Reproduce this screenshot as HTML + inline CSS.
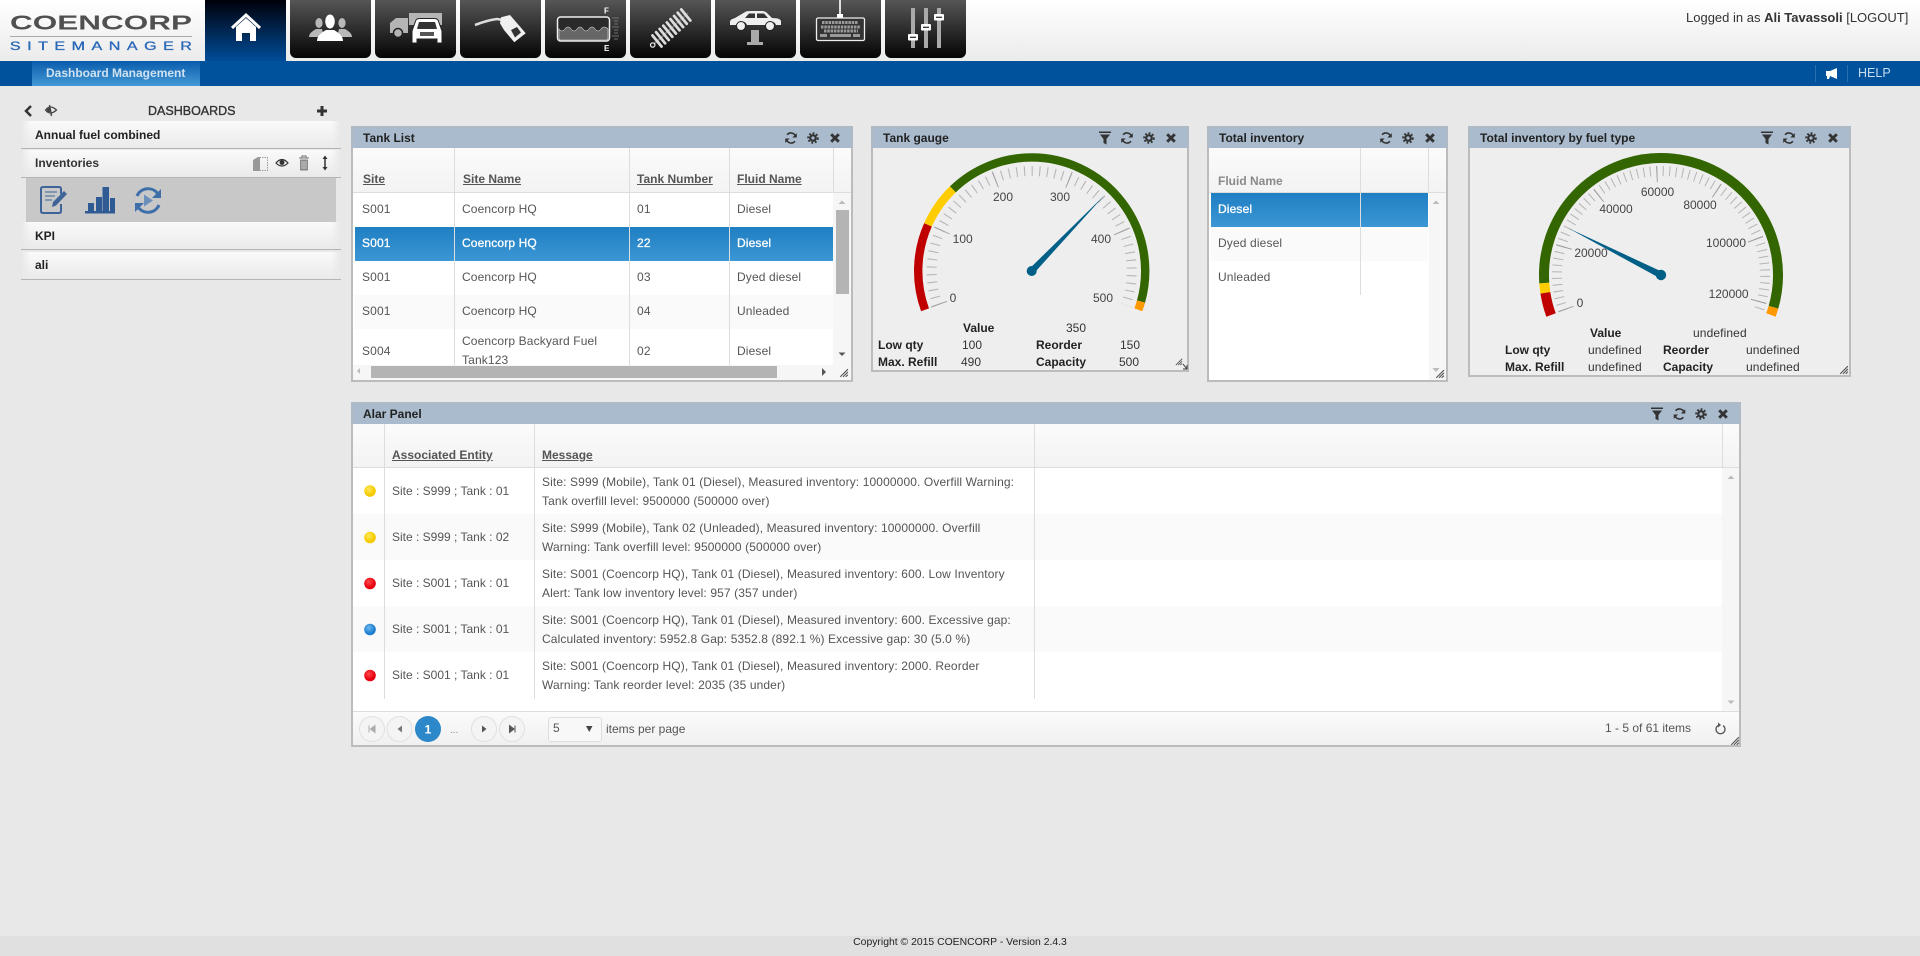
<!DOCTYPE html>
<html><head><meta charset="utf-8"><title>SiteManager</title>
<style>
*{box-sizing:border-box}
html,body{margin:0;padding:0}
body{width:1920px;height:956px;position:relative;overflow:hidden;background:#e8e8e8;font:12px/16px "Liberation Sans",Arial,sans-serif;color:#555}
.a{position:absolute}
.t{position:absolute;white-space:nowrap;line-height:16px;height:16px}
.b{font-weight:bold;color:#222}
.h{font-weight:bold;color:#555;text-decoration:underline}
.panel{position:absolute;border:2px solid #bcbcbc;border-top:0;background:#fff}
.ph{position:absolute;left:-2px;right:-2px;top:0;height:22px;background:#a9bbcd;border:2px solid #b0bac4;border-bottom:0}
.g{background:#eee}
.vl{position:absolute;width:1px;background:#ddd}
.row{position:absolute;height:34px}
.sel{background:linear-gradient(#1f7fc3,#3c96d4)}
.alt{background:#fafafa}
.s{color:#fff;-webkit-text-stroke:.3px #fff}
.l{letter-spacing:.14px}
.m{letter-spacing:.115px}
.side{position:absolute;left:21px;width:320px;height:28px;border-bottom:1px solid #b5b5b5;background:linear-gradient(90deg,#e8e8e8,rgba(232,232,232,0) 3%,rgba(232,232,232,0) 97%,#e8e8e8),linear-gradient(#fafafa,#eaeaea)}
</style></head><body>

<!-- header -->
<div class="a" style="left:0;top:0;width:1920px;height:61px;background:linear-gradient(#ffffff,#ebebeb)"></div>
<div class="a" style="left:205px;top:0;width:81px;height:61px;background:linear-gradient(#00000a,#004c98)"></div>
<div class="a" style="left:0;top:61px;width:1920px;height:25px;background:#00529c"></div>
<div class="a" style="left:32px;top:61px;width:168px;height:25px;background:linear-gradient(#0a5cab,#4499d6)"></div>
<div class="t" style="left:46px;top:65px;font-weight:bold;color:#cfe2f2">Dashboard Management</div>
<div class="a" style="left:290px;top:0;width:81px;height:58px;border-radius:0 0 6px 6px;background:linear-gradient(#565656,#040404)"></div>
<div class="a" style="left:375px;top:0;width:81px;height:58px;border-radius:0 0 6px 6px;background:linear-gradient(#565656,#040404)"></div>
<div class="a" style="left:460px;top:0;width:81px;height:58px;border-radius:0 0 6px 6px;background:linear-gradient(#565656,#040404)"></div>
<div class="a" style="left:545px;top:0;width:81px;height:58px;border-radius:0 0 6px 6px;background:linear-gradient(#565656,#040404)"></div>
<div class="a" style="left:630px;top:0;width:81px;height:58px;border-radius:0 0 6px 6px;background:linear-gradient(#565656,#040404)"></div>
<div class="a" style="left:715px;top:0;width:81px;height:58px;border-radius:0 0 6px 6px;background:linear-gradient(#565656,#040404)"></div>
<div class="a" style="left:800px;top:0;width:81px;height:58px;border-radius:0 0 6px 6px;background:linear-gradient(#565656,#040404)"></div>
<div class="a" style="left:885px;top:0;width:81px;height:58px;border-radius:0 0 6px 6px;background:linear-gradient(#565656,#040404)"></div>
<div class="t" style="left:1686px;top:10px;font-size:13px;color:#333">Logged in as <b>Ali Tavassoli</b> [LOGOUT]</div>
<div class="a" style="left:1815px;top:65px;width:1px;height:17px;background:#2a6fb0"></div>
<div class="a" style="left:1847px;top:65px;width:1px;height:17px;background:#2a6fb0"></div>
<div class="t" style="left:1858px;top:65px;font-size:12.5px;color:#c6dcf0">HELP</div>

<!-- sidebar -->
<div class="t" style="left:148px;top:103px;font-size:12.5px;color:#333;-webkit-text-stroke:.35px #333">DASHBOARDS</div>
<div class="side" style="top:121px"></div>
<div class="side" style="top:150px"></div>
<div class="a" style="left:26px;top:178px;width:310px;height:44px;background:#c8c8c8"></div>
<div class="side" style="top:222px"></div>
<div class="side" style="top:252px"></div>
<div class="t b" style="left:35px;top:127px">Annual fuel combined</div>
<div class="t b" style="left:35px;top:155px;color:#333">Inventories</div>
<div class="t b" style="left:35px;top:228px">KPI</div>
<div class="t b" style="left:35px;top:257px">ali</div>

<!-- Tank list -->
<div class="panel" style="left:351px;top:126px;width:502px;height:256px"><div class="ph"></div></div>
<div class="a" style="left:353px;top:148px;width:498px;height:45px;background:linear-gradient(#fbfbfb,#f3f3f3);border-bottom:1px solid #ddd"></div>
<div class="a" style="left:833px;top:193px;width:18px;height:172px;background:#f6f6f6"></div>
<div class="a" style="left:353px;top:365px;width:498px;height:15px;background:#f6f6f6"></div>
<div class="row sel" style="left:355px;top:227px;width:478px"></div>
<div class="row alt" style="left:355px;top:295px;width:478px"></div>
<div class="vl" style="left:454px;top:148px;height:217px"></div>
<div class="vl" style="left:629px;top:148px;height:217px"></div>
<div class="vl" style="left:729px;top:148px;height:217px"></div>
<div class="vl" style="left:833px;top:148px;height:45px"></div>
<div class="a" style="left:836px;top:210px;width:13px;height:84px;background:#b4b4b4"></div>
<div class="a" style="left:371px;top:366px;width:406px;height:12px;background:#b4b4b4"></div>
<div class="t b" style="left:363px;top:130px">Tank List</div>
<div class="t h" style="left:363px;top:171px">Site</div>
<div class="t h" style="left:463px;top:171px">Site Name</div>
<div class="t h" style="left:637px;top:171px">Tank Number</div>
<div class="t h" style="left:737px;top:171px">Fluid Name</div>
<div class="t l" style="left:362px;top:201px">S001</div><div class="t l" style="left:462px;top:201px">Coencorp HQ</div><div class="t l" style="left:637px;top:201px">01</div><div class="t l" style="left:737px;top:201px">Diesel</div>
<div class="t s l" style="left:362px;top:235px">S001</div><div class="t s l" style="left:462px;top:235px">Coencorp HQ</div><div class="t s l" style="left:637px;top:235px">22</div><div class="t s l" style="left:737px;top:235px">Diesel</div>
<div class="t l" style="left:362px;top:269px">S001</div><div class="t l" style="left:462px;top:269px">Coencorp HQ</div><div class="t l" style="left:637px;top:269px">03</div><div class="t l" style="left:737px;top:269px">Dyed diesel</div>
<div class="t l" style="left:362px;top:303px">S001</div><div class="t l" style="left:462px;top:303px">Coencorp HQ</div><div class="t l" style="left:637px;top:303px">04</div><div class="t l" style="left:737px;top:303px">Unleaded</div>
<div class="t l" style="left:362px;top:343px">S004</div>
<div class="a l" style="left:462px;top:332px;width:160px;height:32px;overflow:hidden;line-height:19px;white-space:nowrap">Coencorp Backyard Fuel<br>Tank123</div>
<div class="t l" style="left:637px;top:343px">02</div><div class="t l" style="left:737px;top:343px">Diesel</div>

<!-- Tank gauge -->
<div class="panel g" style="left:871px;top:126px;width:318px;height:246px"><div class="ph"></div></div>
<div class="t b" style="left:883px;top:130px">Tank gauge</div>
<div class="t b" style="left:963px;top:320px">Value</div><div class="t" style="left:1066px;top:320px;color:#333">350</div>
<div class="t b" style="left:878px;top:337px">Low qty</div><div class="t" style="left:962px;top:337px;color:#333">100</div><div class="t b" style="left:1036px;top:337px">Reorder</div><div class="t" style="left:1120px;top:337px;color:#333">150</div>
<div class="t b" style="left:878px;top:354px">Max. Refill</div><div class="t" style="left:961px;top:354px;color:#333">490</div><div class="t b" style="left:1036px;top:354px">Capacity</div><div class="t" style="left:1119px;top:354px;color:#333">500</div>

<!-- Total inventory -->
<div class="panel" style="left:1207px;top:126px;width:241px;height:256px"><div class="ph"></div></div>
<div class="a" style="left:1209px;top:148px;width:237px;height:45px;background:linear-gradient(#fbfbfb,#f3f3f3);border-bottom:1px solid #ddd"></div>
<div class="a" style="left:1429px;top:193px;width:17px;height:187px;background:#f6f6f6"></div>
<div class="row sel" style="left:1211px;top:193px;width:217px"></div>
<div class="row alt" style="left:1211px;top:227px;width:217px"></div>
<div class="vl" style="left:1360px;top:148px;height:147px"></div>
<div class="vl" style="left:1428px;top:148px;height:45px"></div>
<div class="t b" style="left:1219px;top:130px">Total inventory</div>
<div class="t" style="left:1218px;top:173px;font-weight:bold;color:#8a8a8a">Fluid Name</div>
<div class="t s l" style="left:1218px;top:201px">Diesel</div>
<div class="t l" style="left:1218px;top:235px">Dyed diesel</div>
<div class="t l" style="left:1218px;top:269px">Unleaded</div>

<!-- Fuel type gauge -->
<div class="panel g" style="left:1468px;top:126px;width:383px;height:251px"><div class="ph"></div></div>
<div class="t b" style="left:1480px;top:130px">Total inventory by fuel type</div>
<div class="t b" style="left:1590px;top:325px">Value</div><div class="t m" style="left:1693px;top:325px;color:#333">undefined</div>
<div class="t b" style="left:1505px;top:342px">Low qty</div><div class="t m" style="left:1588px;top:342px;color:#333">undefined</div><div class="t b" style="left:1663px;top:342px">Reorder</div><div class="t m" style="left:1746px;top:342px;color:#333">undefined</div>
<div class="t b" style="left:1505px;top:359px">Max. Refill</div><div class="t m" style="left:1588px;top:359px;color:#333">undefined</div><div class="t b" style="left:1663px;top:359px">Capacity</div><div class="t m" style="left:1746px;top:359px;color:#333">undefined</div>

<!-- Alar panel -->
<div class="panel" style="left:351px;top:402px;width:1390px;height:345px"><div class="ph"></div></div>
<div class="a" style="left:353px;top:424px;width:1386px;height:44px;background:linear-gradient(#fbfbfb,#f3f3f3);border-bottom:1px solid #ddd"></div>
<div class="a" style="left:1722px;top:468px;width:17px;height:243px;background:#f6f6f6"></div>
<div class="a alt" style="left:353px;top:514px;width:1369px;height:46px"></div>
<div class="a alt" style="left:353px;top:606px;width:1369px;height:46px"></div>
<div class="vl" style="left:384px;top:424px;height:275px"></div>
<div class="vl" style="left:534px;top:424px;height:275px"></div>
<div class="vl" style="left:1034px;top:424px;height:275px"></div>
<div class="vl" style="left:1722px;top:424px;height:44px"></div>
<div class="a" style="left:353px;top:711px;width:1386px;height:34px;background:linear-gradient(#fbfbfb,#f0f0f0);border-top:1px solid #ddd"></div>
<div class="t b" style="left:363px;top:406px">Alar Panel</div>
<div class="t h" style="left:392px;top:447px">Associated Entity</div>
<div class="t h" style="left:542px;top:447px">Message</div>
<div class="t" style="left:392px;top:483px">Site : S999 ; Tank : 01</div>
<div class="t" style="left:392px;top:529px">Site : S999 ; Tank : 02</div>
<div class="t" style="left:392px;top:575px">Site : S001 ; Tank : 01</div>
<div class="t" style="left:392px;top:621px">Site : S001 ; Tank : 01</div>
<div class="t" style="left:392px;top:667px">Site : S001 ; Tank : 01</div>
<div class="t m" style="left:542px;top:474px">Site: S999 (Mobile), Tank 01 (Diesel), Measured inventory: 10000000. Overfill Warning:</div>
<div class="t m" style="left:542px;top:493px">Tank overfill level: 9500000 (500000 over)</div>
<div class="t m" style="left:542px;top:520px">Site: S999 (Mobile), Tank 02 (Unleaded), Measured inventory: 10000000. Overfill</div>
<div class="t m" style="left:542px;top:539px">Warning: Tank overfill level: 9500000 (500000 over)</div>
<div class="t m" style="left:542px;top:566px">Site: S001 (Coencorp HQ), Tank 01 (Diesel), Measured inventory: 600. Low Inventory</div>
<div class="t m" style="left:542px;top:585px">Alert: Tank low inventory level: 957 (357 under)</div>
<div class="t m" style="left:542px;top:612px">Site: S001 (Coencorp HQ), Tank 01 (Diesel), Measured inventory: 600. Excessive gap:</div>
<div class="t m" style="left:542px;top:631px">Calculated inventory: 5952.8 Gap: 5352.8 (892.1 %) Excessive gap: 30 (5.0 %)</div>
<div class="t m" style="left:542px;top:658px">Site: S001 (Coencorp HQ), Tank 01 (Diesel), Measured inventory: 2000. Reorder</div>
<div class="t m" style="left:542px;top:677px">Warning: Tank reorder level: 2035 (35 under)</div>
<div class="a" style="left:548px;top:717px;width:54px;height:25px;border:1px solid #ddd;border-radius:3px;background:#f8f8f8"></div>
<div class="t" style="left:553px;top:720px">5</div>
<div class="t" style="left:606px;top:721px">items per page</div>
<div class="t" style="left:1605px;top:720px">1 - 5 of 61 items</div>
<div class="t" style="left:450px;top:723px;font-size:10px;color:#888">...</div>

<!-- footer -->
<div class="a" style="left:0;top:936px;width:1920px;height:20px;background:#e0e0e0"></div>
<div class="t" style="left:0;top:935px;width:1920px;text-align:center;font-size:10.4px;color:#222">Copyright © 2015 COENCORP - Version 2.4.3</div>

<svg class="a" style="left:0;top:0" width="1920" height="956" viewBox="0 0 1920 956" xmlns="http://www.w3.org/2000/svg" font-family="Liberation Sans, Arial, sans-serif">
<defs>
<symbol id="rf" viewBox="-1 -1 18 18"><path d="M13.2 6.5A5.5 5.5 0 0 0 3.6 4.4M2.8 9.5A5.5 5.5 0 0 0 12.4 11.6" fill="none" stroke="#333" stroke-width="1.8"/><path d="M14.5 2.5v5h-5zM1.5 13.5v-5h5z" fill="#333"/></symbol>
<symbol id="gr" viewBox="-2 -2 20 20"><circle cx="8" cy="8" r="3.4" fill="none" stroke="#333" stroke-width="2.8"/><circle cx="8" cy="8" r="6" fill="none" stroke="#333" stroke-width="2.4" pathLength="16" stroke-dasharray="1 1"/></symbol>
<symbol id="cl" viewBox="-1.500 -1.500 19 19"><path d="M3.5 3.5L12.5 12.5M12.5 3.5L3.5 12.5" stroke="#333" stroke-width="3.4"/></symbol>
<symbol id="fl" viewBox="0 0 16 16"><path d="M2 1.5h12V3H2zM3 4.5h10L9.5 9v5.5l-3-1.5V9z" fill="#333"/></symbol>
<symbol id="gp" viewBox="0 0 10 10"><path d="M9 2L2 9M9 4.5L4.5 9M9 7L7 9" stroke="#555" stroke-width="1"/></symbol>
<radialGradient id="dy" cx=".4" cy=".35"><stop offset="0" stop-color="#ffe95a"/><stop offset="1" stop-color="#f5ca00"/></radialGradient>
<radialGradient id="dr" cx=".4" cy=".35"><stop offset="0" stop-color="#ff4a4a"/><stop offset="1" stop-color="#e80010"/></radialGradient>
<radialGradient id="db" cx=".4" cy=".35"><stop offset="0" stop-color="#6db9f0"/><stop offset="1" stop-color="#1f7fcf"/></radialGradient>
</defs>

<!-- logo -->
<text x="10" y="29.500" font-size="20" font-weight="bold" fill="#505050" textLength="182" lengthAdjust="spacingAndGlyphs">COENCORP</text>
<rect x="10" y="36" width="182" height="1" fill="#aaa"/>
<g transform="scale(1.400 1)"><text x="7.100" y="50" font-size="11.500" fill="#2b68b8" stroke="#2b68b8" stroke-width=".3" textLength="130" lengthAdjust="spacing">SITEMANAGER</text></g>

<!-- home -->
<path d="M232 28L246 15L260 28" fill="none" stroke="#fff" stroke-width="3"/>
<path d="M236 27L246 18L256 27V41H250V33H242V41H236Z" fill="#fff"/>

<!-- users -->
<g fill="#b8b8b8"><ellipse cx="319" cy="23" rx="3.6" ry="5"/><ellipse cx="342" cy="23" rx="3.6" ry="5"/><path d="M309 37C309 33 313 31 316 29L322 29L324 37ZM352 37C352 33 348 31 345 29L339 29L337 37Z"/></g>
<g fill="#fff"><ellipse cx="330" cy="21.5" rx="4.8" ry="7"/><path d="M317 41C317 36 321 33 326 30L334 30C339 33 343 36 343 41Z"/></g>

<!-- truck & car -->
<path d="M409 13H442V25H409ZM390 33V23L396 18H408V33Z" fill="#b5b5b5"/><circle cx="398" cy="33" r="4.5" fill="#b5b5b5" stroke="#222" stroke-width="1.5"/>
<path d="M412 43V31L416 20Q417 18.500 420 18.500H434Q437 18.500 438 20L442 31V43H437V39H417V43Z" fill="#fff" stroke="#222" stroke-width="1"/>
<path d="M417 29L419 22H435L437 29Z" fill="#333"/><rect x="420" y="32" width="14" height="4" fill="#555"/>

<!-- nozzle -->
<path d="M475 25Q488 20 497 19L503 20" fill="none" stroke="#ddd" stroke-width="2.600"/>
<path d="M501 17.300L510 15L525.700 33.300L514.300 42.300L504 30L500 23.300Z" fill="#f0f0f0"/><path d="M511 30L517 27L521 32.500L515 37.500Z" fill="#333"/>

<!-- tank -->
<rect x="557.500" y="17" width="52" height="24" rx="3" fill="#2a2a2a" stroke="#eee" stroke-width="1.500"/>
<path d="M559 29Q562 33 565 29T571 29T577 29T583 29T589 29T595 29T601 29T608 29V38Q608 40 606 40H561Q559 40 559 38Z" fill="#666" stroke="#ddd" stroke-width=".6"/>
<path d="M612 18H619M614 21H618M614 24H618M612 27H619M614 30H618M614 33H618M612 36H619M614 39H618" stroke="#888" stroke-width=".8"/>
<text x="604" y="13.500" font-size="8" font-weight="bold" fill="#fff">F</text><text x="604" y="51" font-size="8" font-weight="bold" fill="#fff">E</text>

<!-- spring -->
<path d="M654 44L688 13" stroke="#666" stroke-width="2"/>
<path d="M652.500 35.500L661.500 46.500M656.100 32.250L665.100 43.250M659.700 29L668.700 40M663.300 25.750L672.300 36.750M666.900 22.500L675.900 33.500M670.500 19.250L679.500 30.250M674.100 16L683.100 27M677.700 12.750L686.700 23.750M681.300 9.500L690.300 20.500" stroke="#ddd" stroke-width="2.800" stroke-linecap="round"/>
<circle cx="652.700" cy="45" r="2.200" fill="#222" stroke="#eee" stroke-width="1.200"/>

<!-- lift -->
<path d="M730 25V21Q731 19 735 18L746 11.500Q748 11 752 11H762Q765 11 767 13L772 18Q780 18 781 21V25H776A6 6 0 0 0 765 25H747A6 6 0 0 0 736 25Z" fill="#eee"/>
<path d="M749 13.500L745 18H755V13.500ZM757 13.500V18H768L764 13.500Z" fill="#333"/>
<circle cx="741" cy="26" r="4.500" fill="#eee" stroke="#222"/><circle cx="770" cy="26" r="4.500" fill="#eee" stroke="#222"/>
<path d="M751 30H759V42H763V45H747V42H751Z" fill="#aaa"/>

<!-- keyboard -->
<rect x="839" y="0" width="2" height="14" fill="#ddd"/><rect x="837" y="14" width="6" height="4" fill="#fff"/>
<rect x="816.500" y="18" width="48" height="22.500" rx="1.500" fill="#333" stroke="#eee" stroke-width="1.300"/>
<path d="M822 22.500H858M821 27H860M824 31H858" stroke="#999" stroke-width="3" stroke-dasharray="2.500 .8"/>
<path d="M820 35.500H827M830 35.500H851M853 35.500H860" stroke="#999" stroke-width="3"/>

<!-- sliders -->
<g fill="#aaa"><rect x="911" y="8" width="4" height="40"/><rect x="924" y="8" width="4" height="40"/><rect x="937" y="8" width="4" height="40"/></g>
<g fill="#fff"><rect x="908" y="34" width="10" height="6.500" rx="1"/><rect x="921" y="24" width="10" height="6.500" rx="1"/><rect x="934" y="14" width="10" height="6.500" rx="1"/></g>
<g fill="#222"><rect x="910" y="36.700" width="6" height="1.200"/><rect x="923" y="26.700" width="6" height="1.200"/><rect x="936" y="16.700" width="6" height="1.200"/></g>

<!-- help flag -->
<path d="M1826 71L1830 71L1837 68V79L1830 76L1829 79H1827L1827 76L1826 76Z" fill="#fff"/>

<!-- sidebar icons -->
<path d="M31 106L26 111L31 116" fill="none" stroke="#333" stroke-width="2.500"/>
<path d="M45.500 110Q50 104 56.500 110Q50 116 45.500 110Z" fill="#e8e8e8" stroke="#444" stroke-width="1.300"/><path d="M49.500 105L51.500 116" stroke="#444" stroke-width="1.400"/><circle cx="49" cy="110" r="2.200" fill="#444"/>
<path d="M322 106V116M317 111H327" stroke="#333" stroke-width="3"/>
<path d="M253 160L258 157H260V171H253Z" fill="#999"/><rect x="259.500" y="157.500" width="8" height="13" fill="none" stroke="#999" stroke-dasharray="1.500 1"/>
<path d="M276 163Q282 156 288 163Q282 169 276 163Z" fill="#f3f3f3" stroke="#333" stroke-width="1.200"/><circle cx="282" cy="162.500" r="2.500" fill="#333"/>
<path d="M299 158H309M302 158V156H306V158" fill="none" stroke="#888" stroke-width="1.300"/><path d="M300 159.500H308V170.500H300Z" fill="#888"/><path d="M302 161V169M304 161V169M306 161V169" stroke="#ddd" stroke-width=".8"/>
<path d="M325 158V168" stroke="#333" stroke-width="1.500"/><path d="M322.500 159L325 155.500L327.500 159ZM322.500 167L325 170.500L327.500 167Z" fill="#333"/>

<!-- dashboard tools -->
<g fill="none" stroke="#3e6499" stroke-width="2">
<path d="M61 194V189Q61 187 59 187H43Q41 187 41 189V211Q41 213 43 213H59Q61 213 61 211V204"/>
<path d="M45 192H57M45 196H55M45 200H52" stroke-width="1"/>
</g>
<path d="M52 207L53 202L64 191L67 194L56 205.500Z" fill="#3e6499"/>
<g fill="#2f5a94"><rect x="85" y="211" width="30" height="2.500"/><rect x="88" y="203" width="6" height="8"/><rect x="96" y="197" width="6" height="14"/><rect x="102.500" y="187" width="6.500" height="24"/><rect x="110" y="198" width="5" height="13"/></g>
<path d="M158 194A12 12 0 0 0 137 196M138 207A12 12 0 0 0 159 205" fill="none" stroke="#3e6fa8" stroke-width="3"/>
<path d="M161 189V198H152ZM135 212V203H144Z" fill="#3e6fa8"/><path d="M144 194.500L153 200.500L144 206.500Z" fill="#6d8fbc"/>

<!-- panel tools -->
<use href="#rf" x="783" y="130" width="16" height="16"/><use href="#gr" x="805" y="130" width="16" height="16"/><use href="#cl" x="827" y="130" width="16" height="16"/>
<use href="#fl" x="1097" y="130" width="16" height="16"/><use href="#rf" x="1119" y="130" width="16" height="16"/><use href="#gr" x="1141" y="130" width="16" height="16"/><use href="#cl" x="1163" y="130" width="16" height="16"/>
<use href="#rf" x="1378" y="130" width="16" height="16"/><use href="#gr" x="1400" y="130" width="16" height="16"/><use href="#cl" x="1422" y="130" width="16" height="16"/>
<use href="#fl" x="1759" y="130" width="16" height="16"/><use href="#rf" x="1781" y="130" width="16" height="16"/><use href="#gr" x="1803" y="130" width="16" height="16"/><use href="#cl" x="1825" y="130" width="16" height="16"/>
<use href="#fl" x="1649" y="406" width="16" height="16"/><use href="#rf" x="1671.500" y="406" width="16" height="16"/><use href="#gr" x="1693" y="406" width="16" height="16"/><use href="#cl" x="1715" y="406" width="16" height="16"/>

<!-- scroll arrows & grips -->
<g fill="#888">
<path d="M842 200.500L845.500 204H838.500Z" fill="#bbb"/><path d="M842 356L845.500 352.500H838.500Z" fill="#555"/>
<path d="M360 368V374L357 371Z" fill="#bbb"/><path d="M822 368V376L826 372Z" fill="#555"/>
<path d="M1436 200.500L1439.500 204H1432.500Z" fill="#bbb"/>
<path d="M1436 372L1439.500 368H1432.500Z" fill="#bbb"/>
<path d="M1731 475.500L1734.500 479H1727.500Z" fill="#bbb"/><path d="M1731 704L1734.500 700.500H1727.500Z" fill="#bbb"/>
</g>
<use href="#gp" x="838" y="367" width="11" height="11"/>
<use href="#gp" x="1434" y="368" width="11" height="11"/>
<use href="#gp" x="1838" y="364" width="11" height="11"/>
<use href="#gp" x="1729" y="735" width="11" height="11"/>
<use href="#gp" x="1174" y="357" width="9" height="9"/><path d="M1183 364L1187 369M1187 365V369H1183" fill="none" stroke="#333" stroke-width="1"/>

<!-- gauge 1 -->
<g transform="translate(1031.700 271)">
<g fill="none" stroke-width="8.400">
<path d="M-106.650 38.800A113.500 113.500 0 1 1 106.650 38.800" pathLength="220" stroke="#c00000" stroke-dasharray="44 1000"/>
<path d="M-106.650 38.800A113.500 113.500 0 1 1 106.650 38.800" pathLength="220" stroke="#ffcc00" stroke-dasharray="0 44 22 1000"/>
<path d="M-106.650 38.800A113.500 113.500 0 1 1 106.650 38.800" pathLength="220" stroke="#336600" stroke-dasharray="0 66 149.600 1000"/>
<path d="M-106.650 38.800A113.500 113.500 0 1 1 106.650 38.800" pathLength="220" stroke="#ff9900" stroke-dasharray="0 215.600 4.400 1000"/>
</g>
<path d="M-93.970 34.200A100 100 0 1 1 93.970 34.200" pathLength="220" fill="none" stroke="#b4b4b4" stroke-width="10" stroke-dasharray=".6 3.800"/>
<path d="M-92.560 33.690A98.500 98.500 0 1 1 92.560 33.690" pathLength="220" fill="none" stroke="#a0a0a0" stroke-width="17" stroke-dasharray=".6 43.400"/>
<polygon points="2.300,2.200 -2.300,-2.200 73,-76" fill="#005f87"/><circle r="5" fill="#005f87"/>
</g>
<g font-size="12" fill="#444" text-anchor="middle">
<text x="953" y="302">0</text><text x="962.700" y="243">100</text><text x="1003" y="201">200</text><text x="1060" y="201">300</text><text x="1101" y="243">400</text><text x="1103" y="302">500</text>
</g>

<!-- gauge 2 -->
<g transform="translate(1661 275)">
<g fill="none" stroke-width="10">
<path d="M-109.940 40A117 117 0 1 1 109.940 40" pathLength="220" stroke="#c00000" stroke-dasharray="11.300 1000"/>
<path d="M-109.940 40A117 117 0 1 1 109.940 40" pathLength="220" stroke="#ffcc00" stroke-dasharray="0 11.300 4.800 1000"/>
<path d="M-109.940 40A117 117 0 1 1 109.940 40" pathLength="220" stroke="#336600" stroke-dasharray="0 16.100 199.900 1000"/>
<path d="M-109.940 40A117 117 0 1 1 109.940 40" pathLength="220" stroke="#ff9900" stroke-dasharray="0 216 4 1000"/>
</g>
<path d="M-97.730 35.570A104 104 0 1 1 97.730 35.570" pathLength="220" fill="none" stroke="#b4b4b4" stroke-width="10" stroke-dasharray=".55 3.030"/>
<path d="M-94.900 34.540A101 101 0 1 1 94.900 34.540" pathLength="220" fill="none" stroke="#a0a0a0" stroke-width="16" stroke-dasharray=".6 35.200"/>
<polygon points="1.500,-3 -1.500,3 -93,-47" fill="#005f87"/><circle r="5.200" fill="#005f87"/>
</g>
<g font-size="12" fill="#444" text-anchor="middle">
<text x="1580" y="307">0</text><text x="1591" y="257">20000</text><text x="1616" y="213">40000</text><text x="1657.500" y="196">60000</text><text x="1700" y="209">80000</text><text x="1726" y="247">100000</text><text x="1728.600" y="298">120000</text>
</g>

<!-- alarm dots -->
<circle cx="370" cy="491" r="5.800" fill="url(#dy)"/><circle cx="370" cy="537.500" r="5.800" fill="url(#dy)"/><circle cx="370" cy="583.500" r="5.800" fill="url(#dr)"/><circle cx="370" cy="629.500" r="5.800" fill="url(#db)"/><circle cx="370" cy="675.500" r="5.800" fill="url(#dr)"/>

<!-- pager -->
<g fill="#f4f4f4" stroke="#e0e0e0"><circle cx="372" cy="729" r="12.500"/><circle cx="399.500" cy="729" r="12.500"/><circle cx="484" cy="729" r="12.500"/><circle cx="512" cy="729" r="12.500"/></g>
<circle cx="428" cy="729" r="13" fill="#2c88c8"/>
<text x="428" y="733.500" font-size="12" font-weight="bold" fill="#fff" text-anchor="middle">1</text>
<path d="M369 725.500V732.500M375 725.500V732.500L370.500 729Z" fill="#aaa" stroke="#aaa"/>
<path d="M402 725.500V732.500L397.500 729Z" fill="#777"/>
<path d="M482 725.500V732.500L486.500 729Z" fill="#555"/>
<path d="M509.500 725.500V732.500L514 729ZM515 725.500V732.500" fill="#555" stroke="#555"/>
<path d="M586 726H592.500L589.250 732Z" fill="#444"/>
<path d="M1718 725.500A4.500 4.500 0 1 0 1723 725.500" fill="none" stroke="#555" stroke-width="1.300"/><path d="M1718 722.500L1721 725L1718 727.500Z" fill="#555"/>
</svg>
</body></html>
